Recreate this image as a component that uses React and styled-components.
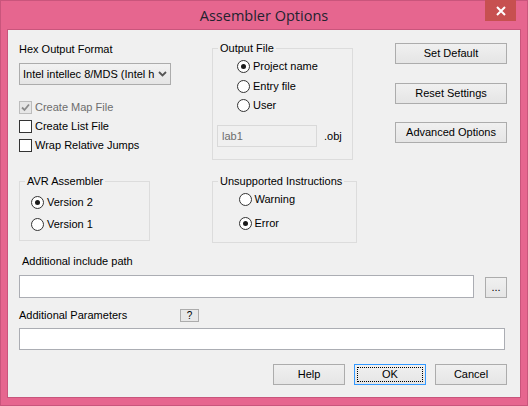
import React from "react";
import styled, { createGlobalStyle } from "styled-components";

// ================= GLOBAL =================
const GlobalStyle = createGlobalStyle`
  html, body {
    margin: 0;
    padding: 0;
    background: #e6668f;
  }
  body {
    font-family: "Liberation Sans", Arial, sans-serif;
    font-size: 11px;
    color: #000;
  }
`;

// ================= WINDOW FRAME =================
const Window = styled.div`
  width: 528px;
  height: 406px;
  box-sizing: border-box;
  background: #e6668f;
  border: 1px solid #c9557c;
  display: flex;
  flex-direction: column;
`;

const TitleBar = styled.div`
  height: 29px;
  display: grid;
  grid-template-columns: 1fr auto 1fr;
  align-items: start;
`;

const TitleText = styled.div`
  grid-column: 2;
  font-family: "Open Sans", "Liberation Sans", sans-serif;
  font-size: 14.5px;
  color: #23232f;
  line-height: 29px;
`;

const CloseButton = styled.div`
  grid-column: 3;
  justify-self: end;
  margin-top: -1px;
  margin-right: 11px;
  width: 31px;
  height: 21px;
  background: #c75050;
  display: flex;
  align-items: center;
  justify-content: center;
`;

const Client = styled.div`
  margin: 0 7px 8px;
  height: 367px;
  box-sizing: border-box;
  background: #f0f0f0;
  box-shadow: 0 0 0 1px #c9557c;
  padding: 13px 13px 0 11px;
  display: flex;
  flex-direction: column;
`;

// ================= TOP GRID =================
const TopGrid = styled.div`
  display: grid;
  grid-template-columns: 193px 183px 112px;
  grid-template-rows: 138px 62px;
`;

const Column = styled.div`
  display: flex;
  flex-direction: column;
  align-items: flex-start;
`;

const Label = styled.div`
  line-height: 13px;
  height: 13px;
  white-space: nowrap;
  color: ${({ $disabled }) => ($disabled ? "#6d6d6d" : "#000")};
  padding-left: ${({ $indent }) => $indent || 0}px;
  width: ${({ $width }) => ($width ? `${$width}px` : "auto")};
`;

// ================= COMBO =================
const Combo = styled.div`
  margin-top: 7px;
  width: 152px;
  height: 22px;
  box-sizing: border-box;
  border: 1px solid #acacac;
  background: linear-gradient(#f2f2f2, #e5e5e5);
  display: flex;
  align-items: center;
  padding: 0 0 0 3px;
`;

const ComboText = styled.span`
  width: 132px;
  white-space: nowrap;
`;

const ComboArrow = styled.span`
  margin-left: 3px;
  display: flex;
  align-items: center;
`;

// ================= CHECKBOX =================
const CheckList = styled.div`
  margin-top: 16px;
  display: flex;
  flex-direction: column;
  gap: 6px;
`;

const CheckRow = styled.div`
  display: flex;
  align-items: center;
  gap: 3px;
  height: 13px;
`;

const CheckBox = styled.span`
  width: 13px;
  height: 13px;
  box-sizing: border-box;
  border: 1px solid ${({ $disabled }) => ($disabled ? "#bcbcbc" : "#333")};
  background: ${({ $disabled }) => ($disabled ? "#e6e6e6" : "#fff")};
  display: flex;
  align-items: center;
  justify-content: center;
`;

// ================= RADIO =================
const RadioList = styled.div`
  display: flex;
  flex-direction: column;
  gap: ${({ $gap }) => $gap}px;
  padding-left: ${({ $indent }) => $indent}px;
`;

const RadioRow = styled.div`
  display: flex;
  align-items: center;
  gap: 3px;
  height: 13px;
`;

const RadioCircle = styled.span`
  width: 13px;
  height: 13px;
  box-sizing: border-box;
  border-radius: 50%;
  border: 1px solid #333;
  background: #fff;
  display: flex;
  align-items: center;
  justify-content: center;

  &::after {
    content: "";
    display: ${({ $checked }) => ($checked ? "block" : "none")};
    width: 5px;
    height: 5px;
    border-radius: 50%;
    background: #1a1a1a;
  }
`;

// ================= GROUP BOX =================
const Group = styled.div`
  position: relative;
  box-sizing: border-box;
  width: ${({ $w }) => $w}px;
  height: ${({ $h }) => $h}px;
  margin-top: ${({ $top }) => $top || 0}px;
  border: 1px solid #dcdcdc;
  padding: ${({ $pad }) => $pad};
`;

const Legend = styled.span`
  position: absolute;
  top: -7px;
  left: 5px;
  padding: 0 2px;
  background: #f0f0f0;
  line-height: 13px;
  white-space: nowrap;
`;

const FieldRow = styled.div`
  margin-top: 13px;
  display: flex;
  align-items: center;
  gap: 7px;
`;

const DisabledInput = styled.div`
  width: 100px;
  height: 22px;
  box-sizing: border-box;
  border: 1px solid #d9d9d9;
  background: #f0f0f0;
  color: #6d6d6d;
  padding-left: 4px;
  line-height: 20px;
`;

// ================= BUTTONS =================
const ButtonStack = styled.div`
  display: flex;
  flex-direction: column;
  gap: 18.5px;
`;

const Button = styled.div`
  position: relative;
  width: ${({ $w }) => $w}px;
  height: ${({ $h }) => $h || 21}px;
  box-sizing: border-box;
  border: 1px solid ${({ $focus }) => ($focus ? "#3399ff" : "#acacac")};
  background: linear-gradient(#f0f0f0, #e5e5e5);
  display: flex;
  align-items: center;
  justify-content: center;
  line-height: 13px;
  white-space: nowrap;
  margin-top: ${({ $top }) => $top || 0}px;

  &::after {
    content: "";
    display: ${({ $focus }) => ($focus ? "block" : "none")};
    position: absolute;
    inset: 2px;
    border: 1px dotted #000;
  }
`;

// ================= BOTTOM =================
const Row = styled.div`
  display: flex;
  align-items: ${({ $align }) => $align || "flex-start"};
  gap: ${({ $gap }) => $gap || 0}px;
  margin-top: ${({ $top }) => $top || 0}px;
  justify-content: ${({ $justify }) => $justify || "flex-start"};
`;

const TextBox = styled.div`
  width: ${({ $w }) => $w}px;
  height: ${({ $h }) => $h}px;
  box-sizing: border-box;
  border: 1px solid #abadb3;
  background: #fff;
`;

const HelpMark = styled.div`
  width: 19px;
  height: 13px;
  box-sizing: border-box;
  border: 1px solid #acacac;
  background: #e8e8e8;
  font-size: 10px;
  line-height: 11px;
  text-align: center;
`;

const Check = ({ color }) => (
  <svg width="9" height="9" viewBox="0 0 9 9">
    <polyline points="1,4.5 3.5,7 8,1.5" fill="none" stroke={color} strokeWidth="1.8" />
  </svg>
);

// ================= COMPONENT =================
export default function App() {
  return (
    <>
      <GlobalStyle />
      <Window>
        <TitleBar>
          <TitleText>Assembler Options</TitleText>
          <CloseButton>
            <svg width="10" height="10" viewBox="0 0 10 10">
              <path d="M1 1 L9 9 M9 1 L1 9" stroke="#fff" strokeWidth="2" />
            </svg>
          </CloseButton>
        </TitleBar>

        <Client>
          <TopGrid>
            {/* left column */}
            <Column>
              <Label>Hex Output Format</Label>
              <Combo>
                <ComboText>Intel intellec 8/MDS (Intel h</ComboText>
                <ComboArrow>
                  <svg width="9" height="6" viewBox="0 0 9 6">
                    <polyline points="1,1 4.5,4.5 8,1" fill="none" stroke="#555" strokeWidth="1.8" />
                  </svg>
                </ComboArrow>
              </Combo>
              <CheckList>
                <CheckRow>
                  <CheckBox $disabled>
                    <Check color="#8a8a8a" />
                  </CheckBox>
                  <Label $disabled>Create Map File</Label>
                </CheckRow>
                <CheckRow>
                  <CheckBox />
                  <Label>Create List File</Label>
                </CheckRow>
                <CheckRow>
                  <CheckBox />
                  <Label>Wrap Relative Jumps</Label>
                </CheckRow>
              </CheckList>
            </Column>

            {/* output file */}
            <Group $w={141} $h={112} $top={5} $pad="11px 0 0 4px">
              <Legend>Output File</Legend>
              <RadioList $gap={6.5} $indent={20}>
                <RadioRow>
                  <RadioCircle $checked />
                  <Label>Project name</Label>
                </RadioRow>
                <RadioRow>
                  <RadioCircle />
                  <Label>Entry file</Label>
                </RadioRow>
                <RadioRow>
                  <RadioCircle />
                  <Label>User</Label>
                </RadioRow>
              </RadioList>
              <FieldRow>
                <DisabledInput>lab1</DisabledInput>
                <Label>.obj</Label>
              </FieldRow>
            </Group>

            {/* right buttons */}
            <ButtonStack>
              <Button $w={112}>Set Default</Button>
              <Button $w={112}>Reset Settings</Button>
              <Button $w={112}>Advanced Options</Button>
            </ButtonStack>

            {/* AVR assembler */}
            <Group $w={131} $h={60} $pad="13.5px 0 0 11px">
              <Legend>AVR Assembler</Legend>
              <RadioList $gap={9} $indent={0}>
                <RadioRow>
                  <RadioCircle $checked />
                  <Label>Version 2</Label>
                </RadioRow>
                <RadioRow>
                  <RadioCircle />
                  <Label>Version 1</Label>
                </RadioRow>
              </RadioList>
            </Group>

            {/* unsupported */}
            <Group $w={145} $h={62} $pad="11px 0 0 25.5px">
              <Legend>Unsupported Instructions</Legend>
              <RadioList $gap={10.5} $indent={0}>
                <RadioRow>
                  <RadioCircle />
                  <Label>Warning</Label>
                </RadioRow>
                <RadioRow>
                  <RadioCircle $checked />
                  <Label>Error</Label>
                </RadioRow>
              </RadioList>
            </Group>
          </TopGrid>

          <Row $top={12}>
            <Label $indent={3}>Additional include path</Label>
          </Row>
          <Row $top={7} $gap={11}>
            <TextBox $w={455} $h={23} />
            <Button $w={22} $top={2}>...</Button>
          </Row>

          <Row $top={11}>
            <Label $width={161}>Additional Parameters</Label>
            <HelpMark>?</HelpMark>
          </Row>
          <Row $top={6}>
            <TextBox $w={486} $h={22} />
          </Row>

          <Row $top={14} $gap={9} $justify="flex-end">
            <Button $w={72}>Help</Button>
            <Button $w={72} $focus>OK</Button>
            <Button $w={72}>Cancel</Button>
          </Row>
        </Client>
      </Window>
    </>
  );
}
